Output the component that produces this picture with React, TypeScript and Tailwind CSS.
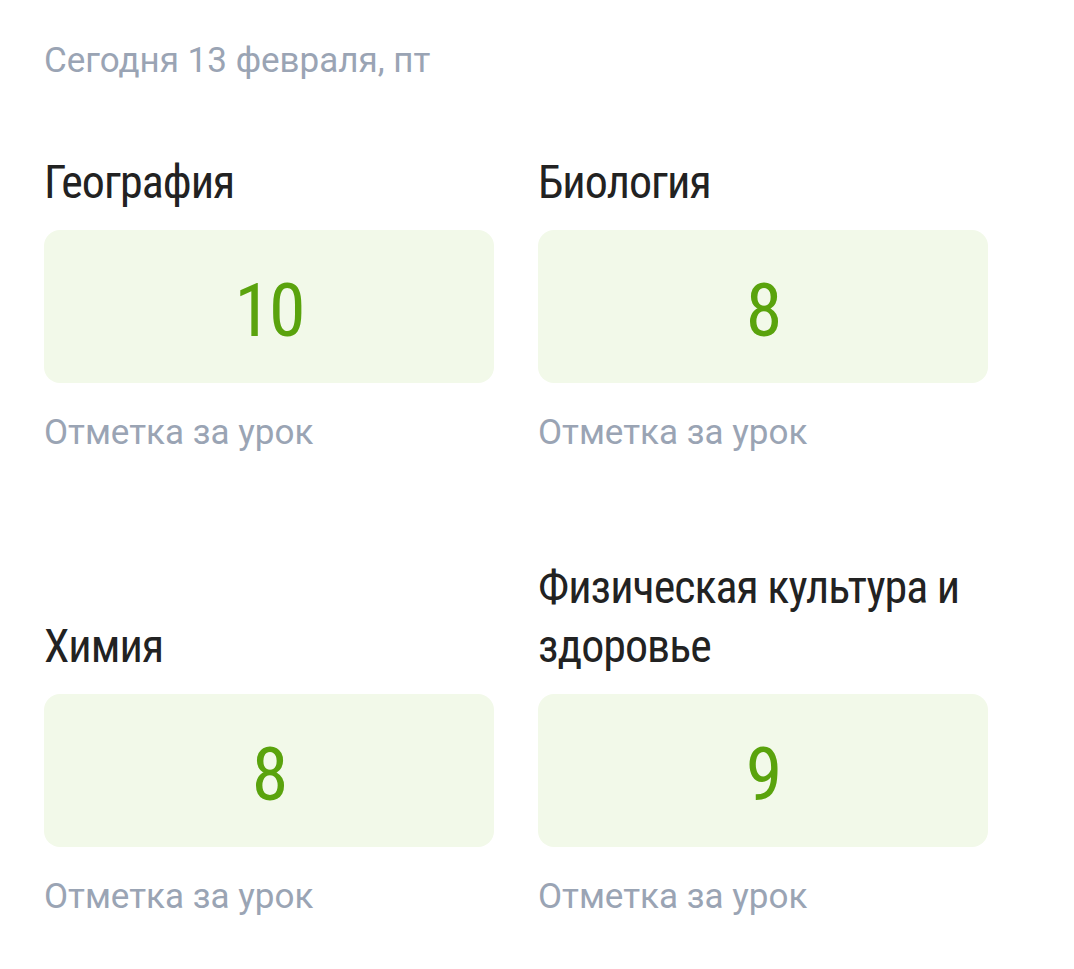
import React from "react";

const items = [
  { title: "География", mark: "10" },
  { title: "Биология", mark: "8" },
  { title: "Химия", mark: "8" },
  { title: "Физическая культура и здоровье", mark: "9" },
];

export default function App() {
  return (
    <div className="min-h-screen bg-white pl-[44px] pr-[86px] pt-[37px]" style={{ fontFamily: "Roboto, 'Noto Sans', sans-serif" }}>
      <div className="text-[35px] leading-[48px] text-[#9aa4b4]">Сегодня 13 февраля, пт</div>
      <div className="grid grid-cols-2 gap-x-[44px] gap-y-[103px] mt-[68px]">
        {items.map((it) => (
          <div key={it.title} className="flex flex-col justify-end">
            <div className="text-[46px] leading-[59px] tracking-[-1px] text-[#222222] font-normal" style={{ fontFamily: "Roboto, sans-serif", fontStretch: "75%" }}>
              {it.title}
            </div>
            <div className="mt-[18px] h-[153px] pt-[8px] rounded-[16px] bg-[#f2f9e9] flex items-center justify-center">
              <span className="text-[74px] leading-none tracking-[-2px] text-[#5aa30d]" style={{ fontFamily: "Roboto, sans-serif", fontStretch: "75%" }}>{it.mark}</span>
            </div>
            <div className="mt-[28px] text-[35px] leading-[44px] text-[#9aa4b4]">Отметка за урок</div>
          </div>
        ))}
      </div>
    </div>
  );
}
